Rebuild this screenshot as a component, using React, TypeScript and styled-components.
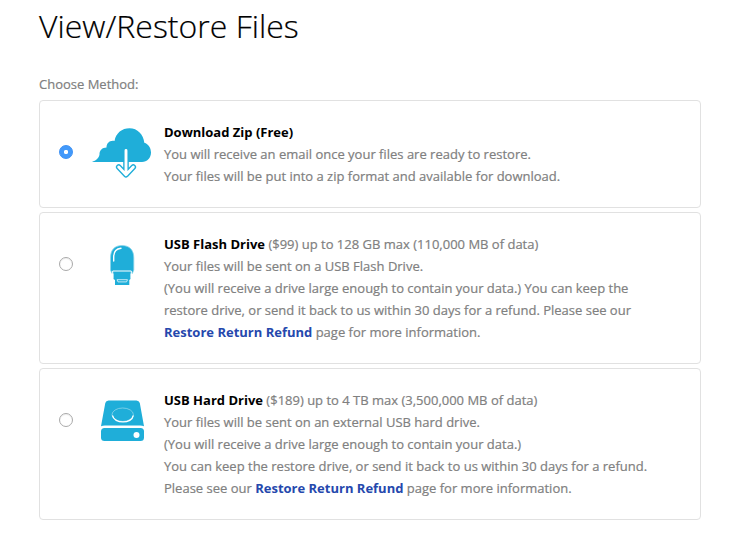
import React from 'react';
import styled, { createGlobalStyle } from 'styled-components';

const GlobalStyle = createGlobalStyle`
  * { box-sizing: border-box; }
  body { margin: 0; background: #fff; }
`;

const Page = styled.main`
  width: 735px;
  height: 547px;
  padding: 0 34px 0 39px;
  overflow: hidden;
  color: #808080;
  font: 13px/22px "Open Sans", sans-serif;
  -webkit-text-stroke: 0.2px currentColor;
`;

const Title = styled.h1`
  margin: 0;
  padding-top: 2px;
  height: 73px;
  color: #000;
  font-size: 32px;
  font-weight: 300;
  line-height: 48px;
  white-space: nowrap;
`;

const Prompt = styled.div`
  height: 27px;
`;

const Methods = styled.div`
  display: flex;
  flex-direction: column;
  gap: 4px;
`;

const Card = styled.label`
  display: grid;
  grid-template-columns: 51px 73px 1fr;
  align-items: start;
  padding: 20px 0;
  border: 1px solid #e1e1e1;
  border-radius: 4px;
`;

const Radio = styled.input`
  appearance: none;
  width: 14px;
  height: 14px;
  margin: 24px 0 0 19px;
  border: 1px solid #aaa;
  border-radius: 50%;
  background: #fff;
  box-shadow: inset 0 1px 1px #eee;

  &:checked {
    border-color: #3b90f4;
    background: radial-gradient(circle, #fff 0 1.8px, #4299fa 2.5px);
    box-shadow: none;
  }
`;

const Icon = styled.svg`
  display: block;
  width: 64px;
  height: 64px;
`;

const Copy = styled.div`
  white-space: nowrap;
`;

const Name = styled.strong`
  color: #000;
  font-weight: 700;
  -webkit-text-stroke: 0;
`;

const Link = styled.a`
  color: #2548ad;
  font-weight: 700;
  text-decoration: none;
  -webkit-text-stroke: 0;
`;

const BLUE = '#1faed9';

const CloudIcon = () => (
  <Icon viewBox="0 0 64 64">
    <path fill={BLUE} d="M1 41C5 39.400 8 37.200 8.500 33.500C8.200 29.300 11.500 26.500 15.500 26.500C15.500 22 19 19 23.500 20C25 12 31 7.300 38.500 7.300C46.500 7.300 52.500 13.500 53.300 21.700C57.500 23 60 27 60 31.500C60 37 56 41 51 41Z" />
    <path d="M35 29.500v24M27.700 46l7.300 7.700 7.300-7.700" fill="none" stroke={BLUE} strokeWidth="5.600" strokeLinecap="round" strokeLinejoin="round" />
    <path d="M35 29.500v24M27.700 46l7.300 7.700 7.300-7.700" fill="none" stroke="#fff" strokeWidth="2.900" strokeLinecap="round" strokeLinejoin="round" />
  </Icon>
);

const FlashIcon = () => (
  <Icon viewBox="0 0 64 64">
    <path d="M21 40.500L19.500 37V25C19.500 16.500 24 12.500 31 12.500S42.800 16.500 42.800 25v12L41.300 40.500Z" fill={BLUE} stroke="#8bd4ea" strokeWidth=".8" />
    <path d="M22.700 28v-4c0-5.500 2.500-8.300 7.300-8.700" fill="none" stroke="#fff" strokeWidth="1.400" strokeLinecap="round" />
    <path d="M22.500 38.500h17v7.500l-1.200 1v5H24v-5l-1.500-1Z" fill={BLUE} />
    <path d="M21.700 45.500v-7.500h18.600v7.500" fill="none" stroke="#fff" />
    <path d="M26 46.700h10.500l-1 2.200h-8.500Z" fill="none" stroke="#d5f0f8" strokeWidth=".9" />
  </Icon>
);

const HardDriveIcon = () => (
  <Icon viewBox="0 0 64 64">
    <path d="M17.500 11.500h28q2.500 0 3.300 2.500L53 37.200q-1.500-.7-4-.7H14q-2.500 0-4 .7l4.300-23.200Q15 11.500 17.500 11.500Z" fill={BLUE} />
    <rect x="10" y="39" width="43" height="13" rx="3.500" fill={BLUE} />
    <ellipse cx="31.700" cy="25.700" rx="10.700" ry="6.700" fill="none" stroke="#8bd4ea" strokeWidth=".8" />
    <path d="M21.500 26.500c1.500 8.500 19.500 8.500 20.800 0" fill="none" stroke="#fff" strokeWidth="1.400" />
    <circle cx="45.500" cy="46" r="3" fill="#fff" />
  </Icon>
);

export default function App() {
  return (
    <>
      <GlobalStyle />
      <Page>
        <Title>View/Restore Files</Title>
        <Prompt>Choose Method:</Prompt>
        <Methods>
          <Card>
            <Radio type="radio" name="method" defaultChecked />
            <CloudIcon />
            <Copy>
              <Name>Download Zip (Free)</Name><br />
              You will receive an email once your files are ready to restore.<br />
              Your files will be put into a zip format and available for download.
            </Copy>
          </Card>
          <Card>
            <Radio type="radio" name="method" />
            <FlashIcon />
            <Copy>
              <Name>USB Flash Drive</Name> ($99) up to 128 GB max (110,000 MB of data)<br />
              Your files will be sent on a USB Flash Drive.<br />
              (You will receive a drive large enough to contain your data.) You can keep the<br />
              restore drive, or send it back to us within 30 days for a refund. Please see our<br />
              <Link>Restore Return Refund</Link> page for more information.
            </Copy>
          </Card>
          <Card>
            <Radio type="radio" name="method" />
            <HardDriveIcon />
            <Copy>
              <Name>USB Hard Drive</Name> ($189) up to 4 TB max (3,500,000 MB of data)<br />
              Your files will be sent on an external USB hard drive.<br />
              (You will receive a drive large enough to contain your data.)<br />
              You can keep the restore drive, or send it back to us within 30 days for a refund.<br />
              Please see our <Link>Restore Return Refund</Link> page for more information.
            </Copy>
          </Card>
        </Methods>
      </Page>
    </>
  );
}
